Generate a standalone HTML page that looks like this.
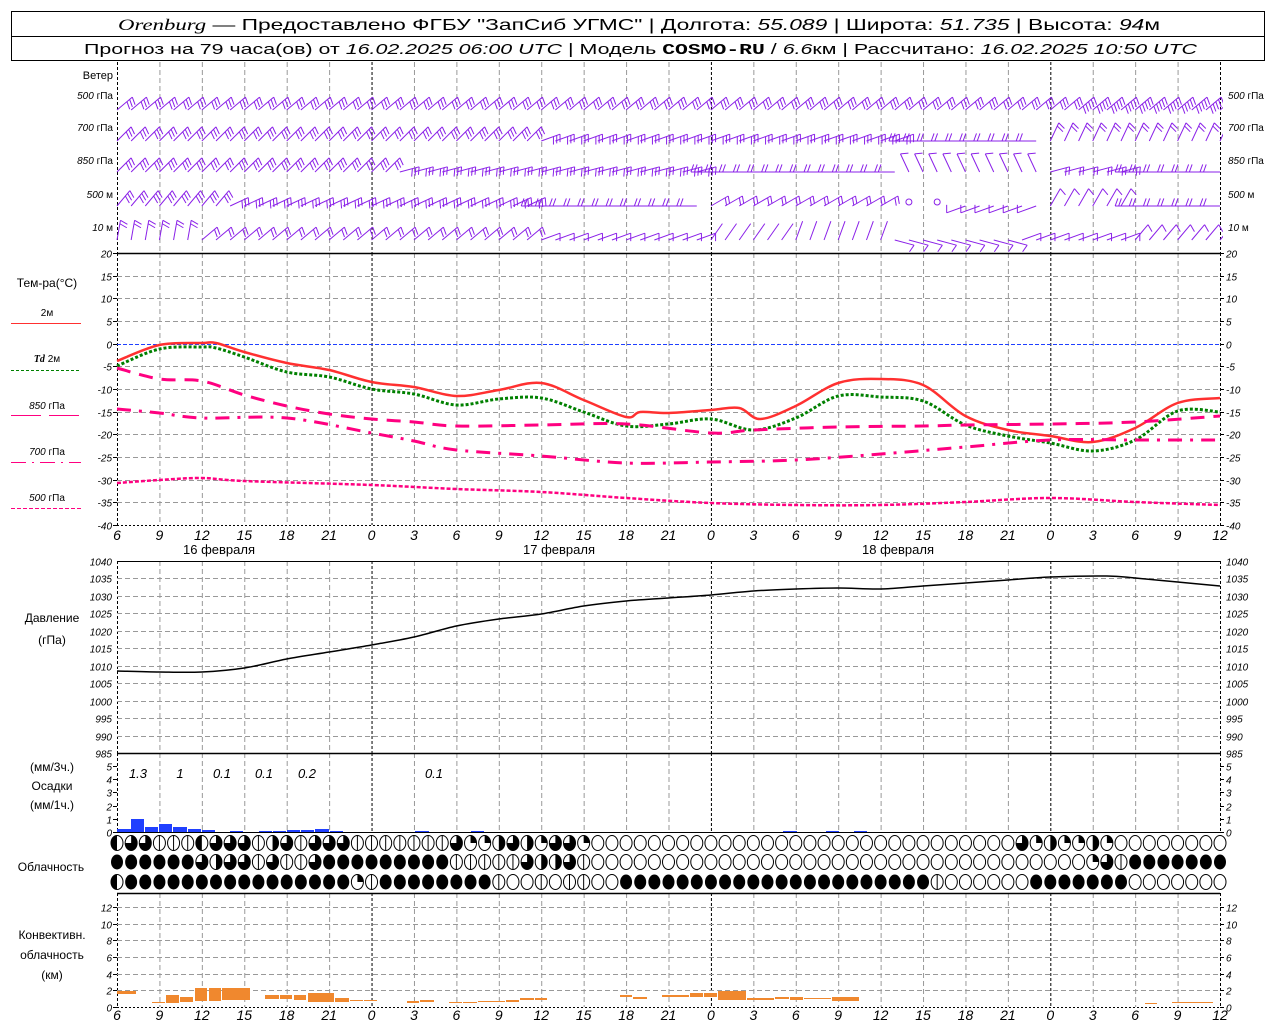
<!DOCTYPE html>
<html><head><meta charset="utf-8">
<style>
html,body{margin:0;padding:0;background:#fff;}
svg{display:block;font-family:"Liberation Sans",sans-serif;}
.it{font-style:italic;}
</style></head>
<body>
<svg id="s" width="1280" height="1024" viewBox="0 0 1280 1024" xmlns="http://www.w3.org/2000/svg">
<defs><clipPath id="wc"><rect x="113" y="62" width="1110" height="190"/></clipPath></defs>
<rect x="0" y="0" width="1280" height="1024" fill="#fff"/>
<rect x="11.5" y="11.5" width="1253" height="49" fill="none" stroke="#000"/>
<line x1="11" y1="36.5" x2="1265" y2="36.5" stroke="#000"/>
<text x="118" y="30" font-size="16" textLength="1042" lengthAdjust="spacingAndGlyphs"><tspan font-family="Liberation Serif" font-style="italic">Orenburg</tspan> — Предоставлено ФГБУ "ЗапСиб УГМС" | Долгота: <tspan class="it">55.089</tspan> | Широта: <tspan class="it">51.735</tspan> | Высота: <tspan class="it">94</tspan>м</text>
<text x="84" y="54" font-size="15" textLength="1113" lengthAdjust="spacingAndGlyphs">Прогноз на 79 часа(ов) от <tspan class="it">16.02.2025 06:00 UTC</tspan>  | Модель <tspan font-family="Liberation Mono" font-weight="bold">COSMO-RU</tspan> / <tspan class="it">6.6</tspan>км | Рассчитано: <tspan class="it">16.02.2025 10:50 UTC</tspan></text>
<g id="g"></g>
<g id="w" clip-path="url(#wc)"></g>
</svg>
<script>
const NS="http://www.w3.org/2000/svg";let G=document.getElementById('g');
function el(t,a,txt){const e=document.createElementNS(NS,t);for(const k in a)e.setAttribute(k,a[k]);if(txt!==undefined)e.textContent=txt;G.appendChild(e);return e;}
const X=h=>117+h*1103/78;
function line(x1,y1,x2,y2,c,w,d){return el('line',{x1,y1,x2,y2,stroke:c||'#000','stroke-width':w||1,'stroke-dasharray':d||'none'});}
function txt(x,y,s,sz,anc,cls,col){return el('text',{x,y,'font-size':sz||12,'text-anchor':anc||'start','class':cls||'',fill:col||'#000'},s);}
const panels=[[62,253],[253,525],[561,753],[753,832],[893,1007]];
for(const [a,b] of panels){
 for(let h=0;h<=78;h+=3){const x=X(h)+0.5;const mid=((h+6)%24==0);
  if(h==0||h==78||mid) line(x,a,x,b,'#000',1,'3,2'); else line(x,a,x,b,'#999',1,'5,3');}
}
for(let v=20;v>=-40;v-=5){const y=Math.round(253+(20-v)*272/60)+0.5;
 if(v==20) line(117,y,1220,y,'#000',1.5);
 else if(v==0) line(117,y,1220,y,'#2040ff',1,'4,2');
 else if(v==-40) line(117,y,1220,y,'#000',1,'2,2');
 else line(117,y,1220,y,'#999',1,'5,3');
 txt(112,y+4,v,10,'end','it');txt(1226,y+4,v,10,'start','it');
 line(113,y,117,y);line(1220,y,1224,y);}
for(let v=1040;v>=985;v-=5){const y=Math.round(561+(1040-v)*192/55)+0.5;
 if(v==1040) line(117,y,1220,y,'#000',1);
 else if(v==985) line(117,y,1220,y,'#000',1.5);
 else line(117,y,1220,y,'#999',1,'5,3');
 txt(112,y+4,v,10,'end','it');txt(1226,y+4,v,10,'start','it');}
for(let v=0;v<=5;v++){const y=Math.round(832-v*13.2)+0.5;txt(112,y+4,v,10,'end','it');txt(1226,y+4,v,10,'start','it');line(113,y,117,y);line(1220,y,1224,y);}
line(117,832.5,1220,832.5,'#000',1);
for(let v=0;v<=12;v+=2){const y=Math.round(1007-v*8.33)+0.5;
 if(v>0) line(117,y,1220,y,'#999',1,'5,3');
 txt(112,y+4,v,10,'end','it');txt(1226,y+4,v,10,'start','it');line(113,y,117,y);line(1220,y,1224,y);}
line(117,893.5,1220,893.5,'#000',1.5);line(117,1007.5,1220,1007.5,'#000',1,'2,2');
for(let h=0;h<=78;h+=3){const hh=(h+6)%24;txt(X(h),540,hh,14,'middle','it');txt(X(h),1020,hh,14,'middle','it');}
txt(219,554,'16 февраля',13,'middle');txt(559,554,'17 февраля',13,'middle');txt(898,554,'18 февраля',13,'middle');
txt(113,79,'Ветер',11,'end');
const wl=[['500','гПа',99],['700','гПа',131],['850','гПа',164],['500','м',198],['10','м',231]];
for(const [a,b,y] of wl){el('text',{x:113,y,'font-size':10,'text-anchor':'end'}).innerHTML='<tspan font-style="italic">'+a+'</tspan> '+b;
 el('text',{x:1228,y,'font-size':10}).innerHTML='<tspan font-style="italic">'+a+'</tspan> '+b;}
txt(47,287,'Тем-ра(°С)',12,'middle');
txt(47,316,'2м',10,'middle');line(11,323.5,81,323.5,'#ff3030',1);
el('text',{x:47,y:362,'font-size':10,'text-anchor':'middle'}).innerHTML='<tspan font-style="italic" font-weight="bold" font-family="Liberation Serif">Td</tspan>  2м';line(11,370.5,81,370.5,'#008000',1,'3,2');
el('text',{x:47,y:409,'font-size':10,'text-anchor':'middle'}).innerHTML='<tspan font-style="italic">850</tspan> гПа';line(11,415.5,81,415.5,'#ff0080',1,'30,8');
el('text',{x:47,y:455,'font-size':10,'text-anchor':'middle'}).innerHTML='<tspan font-style="italic">700</tspan> гПа';line(11,462.5,81,462.5,'#ff0080',1,'15,6,2,6');
el('text',{x:47,y:501,'font-size':10,'text-anchor':'middle'}).innerHTML='<tspan font-style="italic">500</tspan> гПа';line(11,508.5,81,508.5,'#ff0080',1,'4,2');
txt(52,622,'Давление',12,'middle');txt(52,644,'(гПа)',12,'middle');
txt(52,771,'(мм/3ч.)',12,'middle');txt(52,790,'Осадки',12,'middle');txt(52,809,'(мм/1ч.)',12,'middle');
txt(51,871,'Облачность',12,'middle');
txt(52,939,'Конвективн.',12,'middle');txt(52,959,'облачность',12,'middle');txt(52,979,'(км)',12,'middle');
function curve(pts,col,w,d){const P=pts.map(p=>[X(p[0]),p[1]]);let s='M'+P[0][0]+','+P[0][1];
 for(let i=1;i<P.length;i++){const p0=P[Math.max(0,i-2)],p1=P[i-1],p2=P[i],p3=P[Math.min(P.length-1,i+1)];
 s+=' C'+(p1[0]+(p2[0]-p0[0])/6)+','+(p1[1]+(p2[1]-p0[1])/6)+' '+(p2[0]-(p3[0]-p1[0])/6)+','+(p2[1]-(p3[1]-p1[1])/6)+' '+p2[0]+','+p2[1];}
 el('path',{d:s,fill:'none',stroke:col,'stroke-width':w,'stroke-dasharray':d||'none'});}
curve([[0,361],[3,345],[6,343],[7,343],[9,352],[12,363],[15,370],[18,382],[21,387],[24,396],[27,390],[30,383],[33,400],[36,417],[37,412],[39,413],[42,410],[44,408],[45.5,419],[48,406],[51,383],[54,379],[57,385],[60,416],[63,430],[66,436],[69,442],[72,428],[75,403],[78,398]],'#ff3030',2.5);
curve([[0,366],[3,349],[6,347],[7,348],[9,357],[12,372],[15,377],[18,389],[21,394],[24,405],[27,399],[30,398],[33,412],[36,426],[39,424],[42,419],[45,430],[48,418],[51,396],[54,397],[57,401],[60,425],[63,436],[66,443],[69,451],[72,440],[75,411],[78,412]],'#008000',3,'3,2');
curve([[0,368],[3,379],[6,381],[9,395],[12,406],[15,414],[18,419],[21,422],[24,426],[30,425],[36,424],[42,433],[45,430],[51,427],[57,426],[60,425],[66,424],[72,422],[78,416]],'#ff0080',3,'14,9');
curve([[0,409],[3,413],[6,418],[12,418],[18,433],[21,441],[24,450],[30,456],[36,463],[42,462],[48,460],[54,454],[60,447],[66,440],[72,440],[78,440]],'#ff0080',3,'14,8,3,8');
curve([[0,483],[3,480],[6,478],[9,481],[18,485],[24,489],[30,492],[36,498],[42,503],[48,505],[54,505],[60,502],[66,498],[72,502],[78,505]],'#ff0080',2.5,'4,2');
curve([[0,671],[3,672],[6,672],[9,668],[12,659],[15,652],[18,645],[21,637],[24,626],[27,619],[30,614],[33,606],[36,601],[39,598],[42,595],[45,591],[48,589],[51,588],[54,589],[57,586],[60,583],[63,580],[66,577],[70,576],[72,578],[75,582],[78,586]],'#000',1.5);
const pb=[[117,131,829],[131,144,819],[145,158,827],[159,172,824],[173,187,827],[188,201,829],[202,215,830],[230,243,831],[259,272,831],[273,286,831],[287,300,830],[301,314,830],[315,329,829],[330,343,831],[415,429,831],[471,484,831],[783,797,831],[826,839,831],[854,867,831]];
for(const [a,b,y] of pb) el('rect',{x:a,y,width:b-a,height:832-y,fill:'#2040ff'});
[['1.3',138],['1',180],['0.1',222],['0.1',264],['0.2',307],['0.1',434]].forEach(([s,x])=>txt(x,778,s,13,'middle','it'));
const cb=[[117,137,991,994],[152,166,1002,1003],[166,180,995,1003],[180,194,997,1002],[195,208,988,1001],[209,222,988,1001],[222,251,988,1000],[265,280,995,999],[280,293,995,999],[294,307,995,1000],[308,335,993,1002],[335,350,998,1002],[350,364,1000,1001],[364,378,1000,1001],[407,420,1001,1003],[420,435,1000,1002],[449,463,1002,1003],[463,478,1002,1003],[478,506,1001,1002],[506,520,1000,1002],[520,535,998,1000],[535,548,998,1000],[620,633,995,997],[633,648,997,999],[662,690,995,997],[690,704,993,997],[704,718,993,997],[718,747,991,1000],[747,775,998,1000],[775,790,997,999],[790,804,997,1000],[804,832,998,999],[832,860,997,1001],[1145,1158,1003,1004],[1172,1214,1002,1003]];
for(const [a,b,t,bt] of cb) el('rect',{x:a,y:t,width:b-a-1,height:bt-t,fill:'#f0882e'});
const rows=[
 'LTTVVVLTTTVRTVTTTVVVVVVV'+'TQQRTRQTTQ'+'E'.repeat(30)+'TQRQQRQ'+'E'.repeat(8),
 'FFFFFFTRTTVTVVT'+'F'.repeat(9)+'VVVVVTRRTV'+'E'.repeat(35)+'QTV'+'F'.repeat(7),
 'L'+'F'.repeat(16)+'QV'+'F'.repeat(8)+'VEEVEVVEE'+'F'.repeat(22)+'V'+'E'.repeat(6)+'F'.repeat(7)+'E'.repeat(7)];
const ry=[843,862,882];
rows.forEach((r,i)=>{const cy=ry[i];for(let h=0;h<79;h++){const c=r[h]||'E',cx=X(h),R=6,RY=7.5;
 if(c=='F'){el('ellipse',{cx,cy,rx:R,ry:RY,fill:'#000'});continue;}
 el('ellipse',{cx,cy,rx:R,ry:RY,fill:'#fff',stroke:'#000','stroke-width':1});
 if(c=='V')line(cx,cy-RY,cx,cy+RY);
 if(c=='L')el('path',{d:`M${cx},${cy-RY} A${R},${RY} 0 0 0 ${cx},${cy+RY}Z`,fill:'#000'});
 if(c=='R')el('path',{d:`M${cx},${cy-RY} A${R},${RY} 0 0 1 ${cx},${cy+RY}Z`,fill:'#000'});
 if(c=='T')el('path',{d:`M${cx},${cy} L${cx},${cy-RY} A${R},${RY} 0 1 1 ${cx-R},${cy}Z`,fill:'#000'});
 if(c=='Q')el('path',{d:`M${cx},${cy} L${cx},${cy-RY} A${R},${RY} 0 0 1 ${cx+R},${cy}Z`,fill:'#000'});
}});
G=document.getElementById('w');
const C='#8a20e8';
function barb(x,y,ang,n){if(n<0){el('circle',{cx:x,cy:y-4,r:3,fill:'none',stroke:C});return;}
 const a=ang*Math.PI/180,dx=Math.cos(a),dy=Math.sin(a),L=20;const ex=x+dx*L,ey=y+dy*L;line(x,y,ex,ey,C,1);
 const b=a+110*Math.PI/180;for(let i=0;i<n;i++){const px=x+dx*(L-i*3.5),py=y+dy*(L-i*3.5);line(px,py,px+Math.cos(b)*8,py+Math.sin(b)*8,C,1);}}
const W=[
 [110,[[0,68,-40,3],[68,79,-40,5]]],
 [141,[[0,30,-45,3],[30,56,-20,3],[56,66,180,2],[66,79,-65,2]]],
 [172,[[0,20,-45,3],[20,42,-15,3],[42,56,180,2],[56,66,-115,1],[66,72,-15,2],[72,79,180,2]]],
 [206,[[0,8,-50,3],[8,30,-25,3],[30,42,180,2],[42,55,-30,2],[55,60,0,-1],[60,66,160,1],[66,72,-60,1],[72,79,180,2]]],
 [240,[[0,6,-80,2],[6,30,-40,2],[30,42,-20,1],[42,48,-55,0],[48,55,-70,0],[55,64,15,1],[64,72,-20,1],[72,79,-50,1]]]];
for(const [y,segs] of W) for(const [a,b,ang,n] of segs) for(let h=a;h<b&&h<=78;h++){
 if(n<0){if(h%2==0)barb(X(h),y,0,-1);continue;} barb(X(h),y,ang,n);}
</script>
</body></html>
